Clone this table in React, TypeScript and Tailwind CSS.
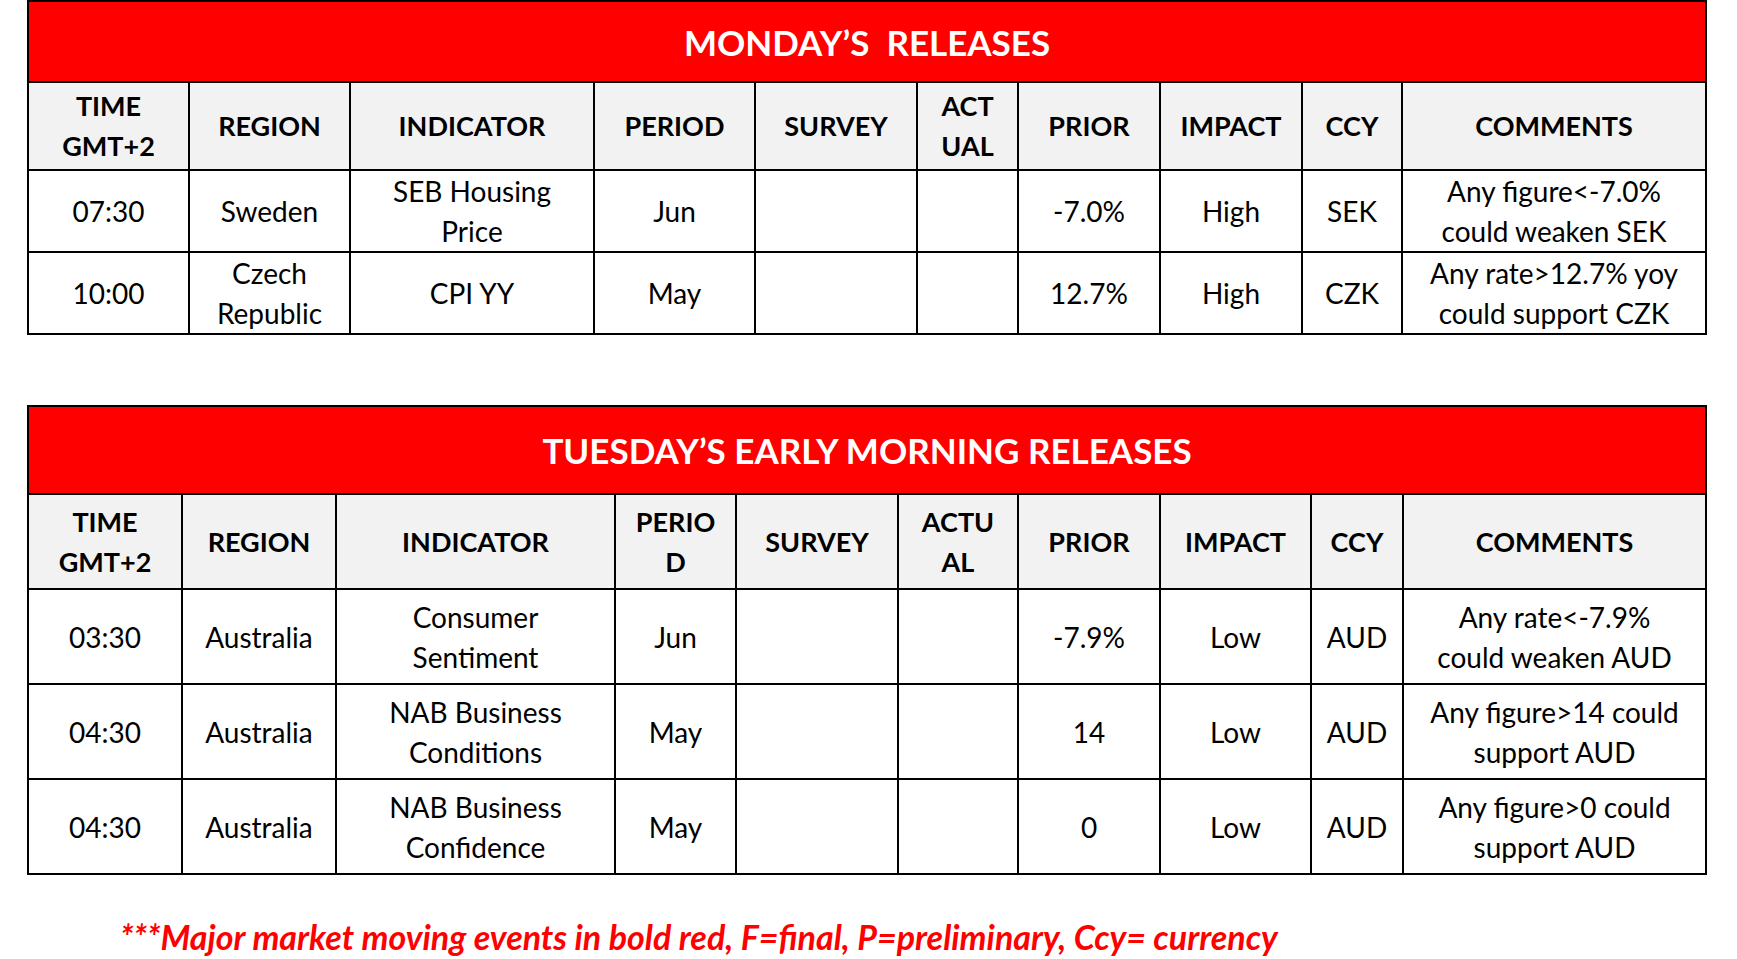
import React from "react";

type Row = {
	time: string;
	region: React.ReactNode;
	indicator: React.ReactNode;
	period: string;
	prior: string;
	impact: string;
	ccy: string;
	comment: React.ReactNode;
};

const mondayRows: Row[] = [
	{
		time: "07:30",
		region: "Sweden",
		indicator: (
			<>
				SEB Housing
				<br />
				Price
			</>
		),
		period: "Jun",
		prior: "-7.0%",
		impact: "High",
		ccy: "SEK",
		comment: (
			<>
				Any figure&lt;-7.0%
				<br />
				could weaken SEK
			</>
		),
	},
	{
		time: "10:00",
		region: (
			<>
				Czech
				<br />
				Republic
			</>
		),
		indicator: "CPI YY",
		period: "May",
		prior: "12.7%",
		impact: "High",
		ccy: "CZK",
		comment: (
			<>
				Any rate&gt;12.7% yoy
				<br />
				could support CZK
			</>
		),
	},
];

const tuesdayRows: Row[] = [
	{
		time: "03:30",
		region: "Australia",
		indicator: (
			<>
				Consumer
				<br />
				Sentiment
			</>
		),
		period: "Jun",
		prior: "-7.9%",
		impact: "Low",
		ccy: "AUD",
		comment: (
			<>
				Any rate&lt;-7.9%
				<br />
				could weaken AUD
			</>
		),
	},
	{
		time: "04:30",
		region: "Australia",
		indicator: (
			<>
				NAB Business
				<br />
				Conditions
			</>
		),
		period: "May",
		prior: "14",
		impact: "Low",
		ccy: "AUD",
		comment: (
			<>
				Any figure&gt;14 could
				<br />
				support AUD
			</>
		),
	},
	{
		time: "04:30",
		region: "Australia",
		indicator: (
			<>
				NAB Business
				<br />
				Confidence
			</>
		),
		period: "May",
		prior: "0",
		impact: "Low",
		ccy: "AUD",
		comment: (
			<>
				Any figure&gt;0 could
				<br />
				support AUD
			</>
		),
	},
];

type TableProps = {
	title: string;
	cols: string[];
	headers: React.ReactNode[];
	rows: Row[];
	titleH: string;
	headH: string;
	rowH: string;
};

function ReleaseTable({ title, cols, headers, rows, titleH, headH, rowH }: TableProps) {
	return (
		<table className="w-[1678px] table-fixed border-collapse border-2 border-black text-center">
			<colgroup>
				{cols.map((c, i) => (
					<col key={i} className={c} />
				))}
			</colgroup>
			<thead>
				<tr className={titleH}>
					<th
						colSpan={10}
						className="border-2 border-black bg-[#ff0000] align-middle text-[35px] font-bold leading-[40px] whitespace-pre text-white"
					>
						{title}
					</th>
				</tr>
				<tr className={`${headH} bg-[#f2f2f2]`}>
					{headers.map((h, i) => (
						<th
							key={i}
							className="border-2 border-black align-middle text-[27px] font-bold leading-[40px] text-black"
						>
							{h}
						</th>
					))}
				</tr>
			</thead>
			<tbody>
				{rows.map((r, i) => (
					<tr key={i} className={rowH}>
						{[r.time, r.region, r.indicator, r.period, "", "", r.prior, r.impact, r.ccy, r.comment].map((v, j) => (
							<td
								key={j}
								className="border-2 border-black align-middle text-[28px] leading-[40px] text-black"
							>
								{v}
							</td>
						))}
					</tr>
				))}
			</tbody>
		</table>
	);
}

export default function App() {
	return (
		<div className="min-h-screen bg-white pl-[27px] font-['Lato',sans-serif]">
			<ReleaseTable
				title={"MONDAY\u2019S  RELEASES"}
				cols={["w-[161px]", "w-[161px]", "w-[244px]", "w-[161px]", "w-[162px]", "w-[101px]", "w-[142px]", "w-[142px]", "w-[100px]", "w-[304px]"]}
				headers={[
					<>
						TIME
						<br />
						GMT+2
					</>,
					"REGION",
					"INDICATOR",
					"PERIOD",
					"SURVEY",
					<>
						ACT
						<br />
						UAL
					</>,
					"PRIOR",
					"IMPACT",
					"CCY",
					"COMMENTS",
				]}
				rows={mondayRows}
				titleH="h-[81px]"
				headH="h-[88px]"
				rowH="h-[82px]"
			/>

			<div className="mt-[70px]">
				<ReleaseTable
					title={"TUESDAY\u2019S EARLY MORNING RELEASES"}
					cols={["w-[154px]", "w-[154px]", "w-[279px]", "w-[121px]", "w-[162px]", "w-[120px]", "w-[142px]", "w-[151px]", "w-[92px]", "w-[303px]"]}
					headers={[
						<>
							TIME
							<br />
							GMT+2
						</>,
						"REGION",
						"INDICATOR",
						<>
							PERIO
							<br />D
						</>,
						"SURVEY",
						<>
							ACTU
							<br />
							AL
						</>,
						"PRIOR",
						"IMPACT",
						"CCY",
						"COMMENTS",
					]}
					rows={tuesdayRows}
					titleH="h-[88px]"
					headH="h-[95px]"
					rowH="h-[95px]"
				/>
			</div>

			<p className="mt-[42px] pl-[93px] text-[34px] leading-[40px] font-bold italic text-[#ff0000]">
				***Major market moving events in bold red, F=final, P=preliminary, Ccy= currency
			</p>
		</div>
	);
}
